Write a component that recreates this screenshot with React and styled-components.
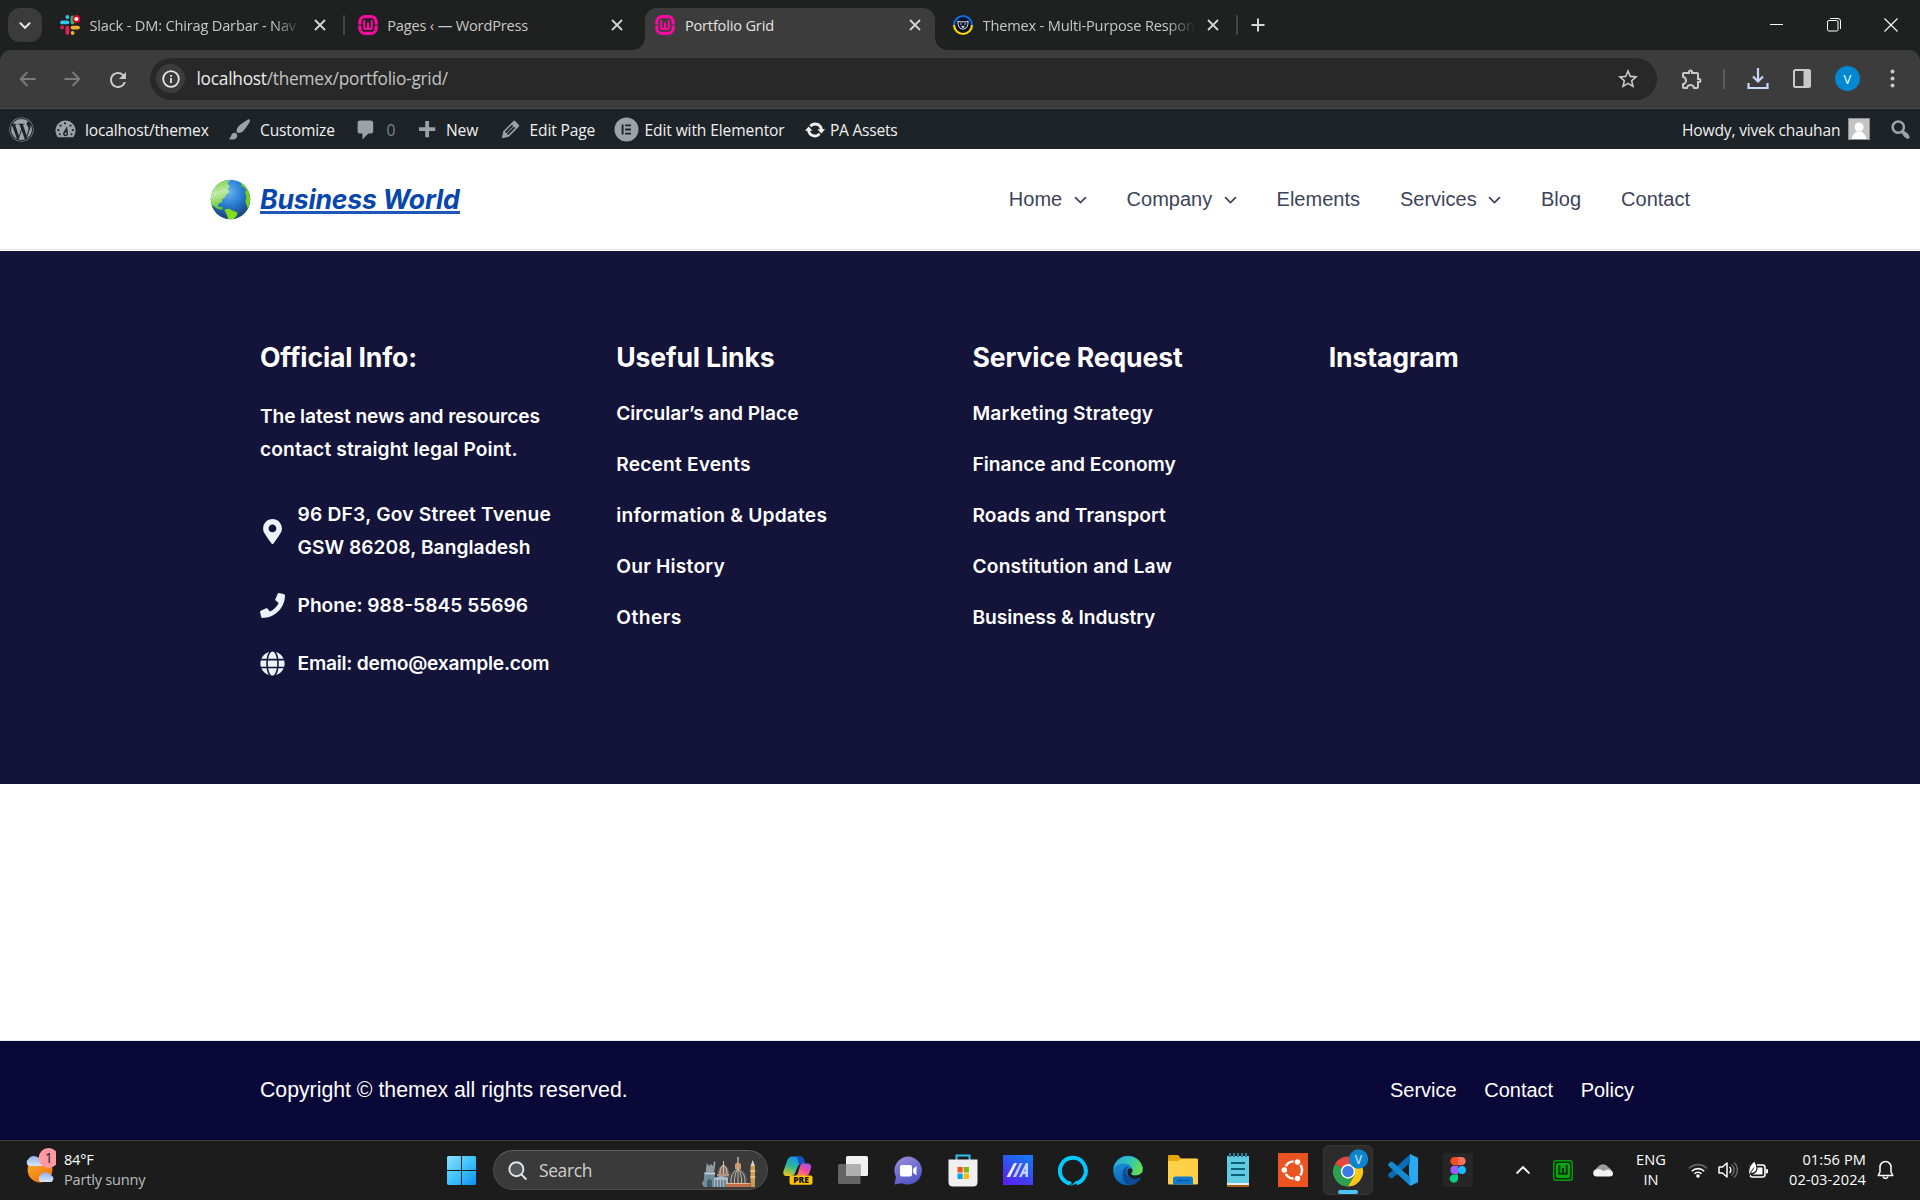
import React from "react";
import styled, { createGlobalStyle, css } from "styled-components";
import { FaMapMarkerAlt, FaPhone, FaGlobe, FaWordpress } from "react-icons/fa";
import { MdOutlineExtension, MdStarOutline, MdRefresh } from "react-icons/md";

const ui = `"Open Sans", "Noto Sans", sans-serif`;
const arial = `"Liberation Sans", Arial, sans-serif`;
const inter = `Inter, "Open Sans", sans-serif`;

const GlobalStyle = createGlobalStyle`
  * { box-sizing: border-box; }
  body { margin: 0; background: #fff; overflow: hidden; }
  svg { display: block; flex: none; }
  h2, p, ul { margin: 0; padding: 0; }
`;

const Screen = styled.div`
  width: 1920px;
  height: 1200px;
  display: flex;
  flex-direction: column;
  overflow: hidden;
  background: #fff;
`;

/* ---------- browser tabs ---------- */
const TabStrip = styled.div`
  height: 50px;
  flex: none;
  display: flex;
  background: #1f2120;
  font-family: ${ui};
  font-size: 14.6px;
  color: #c7c7c7;
`;
const TabSearch = styled.div`
  width: 34px;
  height: 34px;
  margin: 8px 8px 0 8px;
  border-radius: 12px;
  background: #3a3b3a;
  display: grid;
  place-items: center;
`;
const Tab = styled.div`
  position: relative;
  width: 297.7px;
  height: 42px;
  margin-top: 8px;
  padding: 0 0 8px 10px;
  display: flex;
  align-items: center;
  ${(p) =>
    p.$active &&
    css`
      width: 290px;
      margin-right: 7.7px;
      background: #3c3c3c;
      border-radius: 12px 12px 0 0;
      color: #e3e3e3;
      &::before,
      &::after {
        content: "";
        position: absolute;
        bottom: 0;
        width: 12px;
        height: 12px;
      }
      &::before {
        left: -12px;
        background: radial-gradient(circle at 0 0, transparent 11.5px, #3c3c3c 12px);
      }
      &::after {
        right: -12px;
        background: radial-gradient(circle at 100% 0, transparent 11.5px, #3c3c3c 12px);
      }
    `}
`;
const TabTitle = styled.span`
  width: 211px;
  margin: 0 9px 0 9.5px;
  white-space: nowrap;
  letter-spacing: -0.18px;
  ${(p) => p.$fade && "mask-image: linear-gradient(90deg, #000 87%, rgba(0,0,0,0.1) 99%);"}
`;
const TabDivider = styled.span`
  width: 2px;
  height: 20px;
  margin-left: 13px;
  border-radius: 1px;
  background: #434544;
`;
const NewTab = styled.div`
  width: 34px;
  height: 50px;
  display: grid;
  place-items: center;
`;
const WindowButtons = styled.div`
  margin-left: auto;
  width: 150px;
  padding-right: 22px;
  display: flex;
  justify-content: space-between;
  align-items: center;
`;

/* ---------- address bar ---------- */
const ToolbarWrap = styled.div`
  height: 59px;
  flex: none;
  background: #1f2120;
`;
const Toolbar = styled.div`
  height: 59px;
  display: flex;
  align-items: center;
  padding: 0 0 1px 17px;
  background: #3c3c3c;
  border-bottom: 1px solid #474a4a;
  border-radius: 11px 11px 0 0;
`;
const NavButton = styled.div`
  width: 22px;
  height: 22px;
  margin-right: ${(p) => p.$gap || 22}px;
  display: grid;
  place-items: center;
  color: ${(p) => (p.$off ? "#7b7b7b" : "#c9c9c9")};
`;
const AddressField = styled.div`
  width: 1507px;
  height: 42px;
  border-radius: 21px;
  background: #282828;
  display: flex;
  align-items: center;
  padding-left: 7px;
  font-family: ${ui};
  font-size: 17.3px;
  letter-spacing: -0.24px;
  color: #c3c3c3;
`;
const SiteInfo = styled.span`
  width: 29px;
  height: 29px;
  border-radius: 50%;
  background: #3c3c3c;
  display: grid;
  place-items: center;
  margin: 0 11.5px 0 -1px;
`;
const Host = styled.span`
  color: #ececec;
`;
const StarSlot = styled.span`
  margin-left: auto;
  margin-right: 17px;
  color: #c9c9c9;
`;
const BarTools = styled.div`
  flex: 1;
  display: flex;
  align-items: center;
  padding-left: 23px;
  color: #c9c9c9;
`;
const ToolDivider = styled.span`
  width: 2px;
  height: 20px;
  margin: 0 22px 0 19px;
  background: #5b5b5b;
`;
const PanelSlot = styled.span`
  margin-left: 24px;
`;
const Profile = styled.span`
  width: 25px;
  height: 25px;
  margin: 0 30px 0 24px;
  border-radius: 50%;
  background: #0288d1;
  color: #fff;
  font: 13px ${ui};
  display: grid;
  place-items: center;
`;

/* ---------- admin bar ---------- */
const AdminBar = styled.div`
  height: 40px;
  flex: none;
  display: flex;
  align-items: center;
  padding: 1px 7px 0 8.5px;
  background: #1d2327;
  color: #f0f0f1;
  font-family: ${ui};
  font-size: 15.6px;
`;
const AdminIcon = styled.span`
  width: 25px;
  height: 25px;
  margin-left: ${(p) => p.$ml || 0}px;
  display: grid;
  place-items: center;
  color: ${(p) => p.$c || "#9ca2a7"};
`;
const AdminLabel = styled.span`
  width: ${(p) => p.$w}px;
  margin-left: ${(p) => p.$ml || 7}px;
  letter-spacing: ${(p) => p.$ls || "-0.16px"};
  white-space: nowrap;
  color: ${(p) => p.$c || "inherit"};
`;
const AdminRight = styled.div`
  margin-left: auto;
  display: flex;
  align-items: center;
`;
const Gravatar = styled.span`
  width: 22px;
  height: 22px;
  margin: -1px 18px 0 8px;
  border: 1px solid #8c8f94;
  background: #c4c4c4;
  overflow: hidden;
`;

/* ---------- site header ---------- */
const SiteHeader = styled.header`
  height: 101px;
  flex: none;
  margin-bottom: 1px;
  border-bottom: 1px solid #e4e4e8;
  padding: 0 230px 0 210px;
  display: flex;
  align-items: center;
  justify-content: space-between;
`;
const Brand = styled.div`
  display: flex;
  align-items: center;
  gap: 9px;
`;
const BrandName = styled.span`
  width: 200px;
  height: 30px;
  font: italic 700 26.6px/31px ${inter};
  letter-spacing: -0.2px;
  color: #0746ad;
  white-space: nowrap;
  border-bottom: 3px solid #1d57b8;
`;
const Menu = styled.nav`
  display: flex;
  gap: 40px;
  font: 20px ${arial};
  color: #3d4459;
`;
const MenuItem = styled.span`
  display: flex;
  align-items: center;
  gap: 11.4px;
`;

/* ---------- info section ---------- */
const InfoSection = styled.section`
  height: 533px;
  flex: none;
  background: #14133a;
  color: #fff;
  padding: 90px 0 0 260px;
  display: grid;
  grid-template-columns: repeat(4, 356.25px);
  align-content: start;
  font: 600 19.2px/33px ${inter};
`;
const Heading = styled.h2`
  font: 700 26.6px/33px ${inter};
  letter-spacing: -0.15px;
  white-space: nowrap;
`;
const Intro = styled.div`
  margin: 26px 0 32px;
`;
const Line = styled.div`
  letter-spacing: ${(p) => p.$ls}px;
  white-space: nowrap;
`;
const ContactRow = styled.div`
  display: flex;
  align-items: center;
  margin-bottom: 25px;
`;
const ContactIcon = styled.span`
  width: 25px;
  margin-right: 12.5px;
  display: grid;
  place-items: center;
  color: #eef2f9;
`;
const LinkList = styled.ul`
  list-style: none;
  margin-top: 14px;
`;
const LinkItem = styled.li`
  line-height: 51px;
  letter-spacing: ${(p) => p.$ls}px;
`;

/* ---------- footer ---------- */
const Blank = styled.div`
  height: 257px;
  flex: none;
  border-bottom: 1px solid #e3eaec;
`;
const Footer = styled.footer`
  height: 99px;
  flex: none;
  padding: 0 286px 0 260px;
  display: flex;
  align-items: center;
  justify-content: space-between;
  background: #0a0838;
  color: #fff;
  font: 21.25px ${arial};
`;
const FooterLinks = styled.div`
  display: flex;
  gap: 27.5px;
  font-size: 20px;
`;

/* ---------- taskbar ---------- */
const Taskbar = styled.div`
  height: 60px;
  flex: none;
  display: flex;
  align-items: center;
  padding-bottom: 1px;
  background: #1c1c1c;
  border-top: 1px solid #3f4040;
  font: 14.6px/20px ${ui};
  color: #fff;
`;
const Weather = styled.div`
  width: 447px;
  padding: 0 0 3px 24px;
  display: flex;
  align-items: center;
  gap: 8px;
  letter-spacing: -0.22px;
`;
const WeatherArt = styled.div`
  margin-top: -6px;
`;
const Muted = styled.div`
  color: #bdbdbd;
`;
const SearchPill = styled.div`
  width: 275px;
  height: 40px;
  margin: 0 15px 0 17px;
  padding: 0 11px 0 14px;
  border-radius: 20px;
  border: 1px solid #4c4c4c;
  border-top-color: #606060;
  background: #3a3a3a;
  display: flex;
  align-items: center;
  font-size: 17.4px;
  color: #cfcfcf;
`;
const SearchText = styled.span`
  flex: 1;
  margin-left: 12px;
  letter-spacing: -0.35px;
`;
const SkylineSlot = styled.span`
  margin-top: 3px;
`;
const Apps = styled.div`
  display: flex;
  margin-left: -10px;
`;
const AppButton = styled.div`
  width: 50px;
  height: 50px;
  margin-right: 5px;
  display: grid;
  place-items: center;
  border-radius: 6px;
  ${(p) =>
    p.$open &&
    css`
      background: #2c2c2c;
      box-shadow: inset 0 0 0 1px #353535;
      position: relative;
      &::after {
        content: "";
        position: absolute;
        left: 15px;
        bottom: 1px;
        width: 20px;
        height: 4px;
        border-radius: 2px;
        background: #4cc2ff;
      }
    `}
`;
const Tray = styled.div`
  margin-left: auto;
  width: 407px;
  display: flex;
  align-items: center;
`;
const TrayIcon = styled.span`
  width: 20px;
  margin-right: ${(p) => p.$gap}px;
  display: grid;
  place-items: center;
`;
const TrayText = styled.div`
  width: ${(p) => p.$w}px;
  margin-right: ${(p) => p.$gap}px;
  padding-bottom: 2px;
  letter-spacing: 0.08px;
  white-space: nowrap;
  display: flex;
  flex-direction: column;
  align-items: ${(p) => (p.$align === "right" ? "flex-end" : "center")};
`;

/* ---------- drawings ---------- */
const Cross = ({ size = 10, w = 1.8, color = "#d5d5d5" }) => (
  <svg width="20" height="20" viewBox="-10 -10 20 20" stroke={color} strokeWidth={w}>
    <path d={`M${-size / 2} ${-size / 2}L${size / 2} ${size / 2}M${size / 2} ${-size / 2}L${-size / 2} ${size / 2}`} />
  </svg>
);
const Chevron = ({ w = 12, s = 1.6, up, color = "currentColor" }) => (
  <svg width={w} height={w} viewBox="0 0 12 12" fill="none" stroke={color} strokeWidth={s} strokeLinecap="round">
    <path d={up ? "M1 8.5L6 3.5L11 8.5" : "M1.4 4.2L6 8.8L10.6 4.2"} />
  </svg>
);
const SlackIcon = () => (
  <svg width="20" height="20" viewBox="0 0 20 20" strokeLinecap="round" strokeWidth="3.8" fill="none">
    <path d="M7.4 7.4H2M7.4 2V2" stroke="#36c5f0" />
    <path d="M12.5 2.5V7.4" stroke="#2eb67d" />
    <path d="M2 12.5V12.5M7.4 12.6V18" stroke="#e01e5a" />
    <path d="M12.5 12.6H18M12.6 18V18" stroke="#ecb22e" />
    <circle cx="16.4" cy="4" r="3" fill="#fff" stroke="#e60023" strokeWidth="1.8" />
  </svg>
);
const WampIcon = ({ color = "#f80a9e", bg = "#1f2120" }) => (
  <svg width="20" height="20" viewBox="0 0 20 20" fill="none">
    <rect x="1.8" y="1.6" width="16.4" height="16.8" rx="5.5" stroke={color} strokeWidth="3.2" />
    <path d="M0 10H3.5M16.5 10H20" stroke={bg} strokeWidth="1.2" />
    <path d="M6.2 5.2V12.2Q6.2 14 7.8 14Q10 14 10 12.2V7.5V12.2Q10 14 12.2 14Q13.8 14 13.8 12.2V5.2" stroke={color} strokeWidth="2.1" />
  </svg>
);
const BearIcon = () => (
  <svg width="20" height="20" viewBox="0 0 20 20">
    <path d="M0 10A10 10 0 0 1 20 10Z" fill="#0a6fe8" />
    <path d="M0 10A10 10 0 0 0 20 10Z" fill="#ffd800" />
    <circle cx="10" cy="10" r="7.9" fill="#0b1226" />
    <path d="M4.8 6.2L7 6.8H13L15.2 6.2L14.8 9.5Q14 14 10 14Q6 14 5.2 9.5Z" fill="none" stroke="#dfe5ee" strokeWidth="1" />
    <path d="M7 9H8.6M11.4 9H13M8.6 11.4H11.4L10 12.6Z" stroke="#dfe5ee" strokeWidth="1" />
  </svg>
);
const Arrow = ({ flip }) => (
  <svg width="20" height="20" viewBox="0 0 20 20" fill="none" stroke="currentColor" strokeWidth="1.9">
    <path d={flip ? "M2.5 10H17M10.5 3L17.3 10L10.5 17" : "M17.5 10H3M9.5 3L2.7 10L9.5 17"} />
  </svg>
);
const Dash = ({ d, size = 25 }) => (
  <svg width={size} height={size} viewBox="0 0 20 20" fill="currentColor">
    <path fillRule="evenodd" d={d} />
  </svg>
);
const D = {
  comment: "M5 2h9c1.1 0 2 .9 2 2v7c0 1.1-.9 2-2 2h-2l-5 5v-5H5c-1.1 0-2-.9-2-2V4c0-1.1.9-2 2-2z",
  plus: "M17 8.2v3h-5v5H9v-5H4v-3h5v-5h3v5h5z",
  edit: "M13.89 3.39l2.71 2.72c.46.46.42 1.24.03 1.64l-8.01 8.02-5.56 1.16 1.16-5.58s7.6-7.63 7.99-8.03c.39-.39 1.22-.39 1.68.07zm-2.73 2.79l-5.59 5.61 1.11 1.11 5.54-5.65zm-2.97 8.23l5.58-5.6-1.07-1.08-5.59 5.6z",
  brush:
    "M18.33 3.57s.27-.8-.31-1.36c-.53-.52-1.22-.24-1.22-.24-.61.3-5.76 3.47-7.67 5.57-.86.96-2.06 3.79-1.09 4.82.92.98 3.96-.17 4.79-1 2.06-2.06 5.21-7.17 5.5-7.79zM1.4 17.65c2.37-1.56 1.46-3.41 3.23-4.64.93-.65 2.22-.62 3.08.29.63.67.8 2.57-.16 3.46-1.57 1.45-4 1.55-6.15.89z",
  update:
    "M10.2 3.28c3.53 0 6.43 2.61 6.92 6h2.08l-3.5 4-3.5-4h2.32c-.45-1.97-2.21-3.45-4.32-3.45-1.45 0-2.73.71-3.54 1.78L4.95 5.66C6.23 4.2 8.11 3.28 10.2 3.28zm-.4 13.44c-3.52 0-6.43-2.61-6.92-6H.8l3.5-4c1.17 1.33 2.33 2.67 3.5 4H5.48c.45 1.97 2.21 3.45 4.32 3.45 1.45 0 2.73-.71 3.54-1.78l1.71 1.95c-1.28 1.46-3.15 2.38-5.25 2.38z",
  search:
    "M12.14 4.18c1.87 1.87 2.11 4.75.72 6.89.12.1.22.21.36.31.2.16.47.36.81.59.34.24.56.39.66.47.42.31.73.57.94.78.32.32.6.65.84 1 .25.35.44.69.59 1.04.14.35.21.68.18 1-.02.32-.14.59-.36.81s-.49.34-.81.36c-.31.02-.65-.04-.99-.19-.35-.14-.7-.34-1.04-.59-.35-.24-.68-.52-1-.84-.21-.21-.47-.52-.77-.93-.1-.13-.25-.35-.47-.66-.22-.32-.4-.57-.56-.78-.16-.2-.29-.35-.44-.5-2.07 1.09-4.69.76-6.44-.98-2.14-2.15-2.14-5.64 0-7.78 2.15-2.15 5.63-2.15 7.78 0zm-1.41 6.36c1.36-1.37 1.36-3.58 0-4.95-1.37-1.37-3.59-1.37-4.95 0-1.37 1.37-1.37 3.58 0 4.95 1.36 1.37 3.58 1.37 4.95 0z",
};
const Gauge = () => (
  <svg width="25" height="25" viewBox="0 0 20 20">
    <path d="M3.9 16.2H16.1C17.3 14.7 18 12.8 18 10.8C18 6.4 14.4 2.8 10 2.8S2 6.4 2 10.8C2 12.8 2.7 14.7 3.9 16.2Z" fill="#9ca2a7" />
    <g fill="#1d2327">
      <circle cx="9.6" cy="5" r="0.9" />
      <circle cx="6" cy="6.8" r="0.9" />
      <circle cx="14" cy="6.8" r="0.9" />
      <circle cx="4.2" cy="10.4" r="0.9" />
      <circle cx="15.8" cy="10.4" r="0.9" />
      <circle cx="5.4" cy="13.8" r="0.8" />
      <circle cx="14.8" cy="13.8" r="0.8" />
      <path d="M11.2 7.4L12 13A2 2 0 1 1 8.2 12.6Z" />
    </g>
    <circle cx="10.2" cy="13.2" r="0.9" fill="#9ca2a7" />
  </svg>
);
const ElementorIcon = () => (
  <svg width="25" height="25" viewBox="0 0 25 25">
    <circle cx="12.5" cy="12.5" r="12" fill="#9ca2a7" />
    <path d="M8.6 7.5V17.5M11.2 8.4H17M11.2 12.5H17M11.2 16.6H17" stroke="#1d2327" strokeWidth="1.9" />
  </svg>
);
const GlobeLogo = () => (
  <svg width="41" height="41" viewBox="0 0 40 40">
    <defs>
      <radialGradient id="sea" cx="0.45" cy="0.3" r="0.75">
        <stop offset="0" stopColor="#6bb4ee" />
        <stop offset="0.45" stopColor="#2b7fd4" />
        <stop offset="1" stopColor="#14386a" />
      </radialGradient>
      <linearGradient id="land" x1="0.2" y1="0" x2="0.4" y2="1">
        <stop offset="0" stopColor="#6fcf3a" />
        <stop offset="0.45" stopColor="#c2ebaa" />
        <stop offset="1" stopColor="#5cc820" />
      </linearGradient>
      <clipPath id="ball">
        <circle cx="20" cy="20" r="19.2" />
      </clipPath>
    </defs>
    <circle cx="20" cy="20" r="19.3" fill="url(#sea)" />
    <g clipPath="url(#ball)">
      <path d="M0 24V8L10 1L20 1.5L17 4L19.5 8L17 9L19 13L16 15L14.5 18L12 20L11.5 23L9 23.5L7.5 26L10 27.5L12 27L12.5 30L8 29.5L3 26Z" fill="url(#land)" />
      <path d="M14 30L18 29L27 33L26 36L22 40H18L16.5 35Z" fill="#86dc1c" />
      <path d="M28 1L34 5L40 13V27L36.500 28L34.500 22L35.500 17L34 13L35.500 11L32 7L30 7.500L31 5Z" fill="#6fce22" />
    </g>
  </svg>
);

/* taskbar drawings */
const WeatherIcon = () => (
  <svg width="32" height="36" viewBox="0 0 32 36">
    <defs>
      <linearGradient id="sun" x1="0" y1="0" x2="0.6" y2="1">
        <stop offset="0" stopColor="#f8b52c" />
        <stop offset="1" stopColor="#f0740f" />
      </linearGradient>
      <linearGradient id="cl" x1="0" y1="0" x2="0" y2="1">
        <stop offset="0" stopColor="#8fb0ea" />
        <stop offset="1" stopColor="#dbe6fa" />
      </linearGradient>
    </defs>
    <circle cx="16" cy="22" r="12.4" fill="url(#sun)" />
    <path d="M5 18A4 4 0 0 1 4.5 11A6 6 0 0 1 15 11A4 4 0 0 1 18 18Z" fill="url(#cl)" />
    <path d="M17 34A4 4 0 0 1 16.5 27A6 6 0 0 1 26.5 27A3.8 3.8 0 0 1 27.5 34Z" fill="url(#cl)" />
    <circle cx="24.6" cy="10" r="10" fill="#ff99a4" />
    <text x="24.6" y="15" fontSize="14" fill="#1c1c1c" textAnchor="middle" fontFamily="Open Sans">1</text>
  </svg>
);
const StartIcon = () => (
  <svg width="29" height="29" viewBox="0 0 29 29">
    <defs>
      <linearGradient id="st" x1="0" y1="0" x2="1" y2="1">
        <stop offset="0" stopColor="#8be0ff" />
        <stop offset="0.5" stopColor="#3fc3fb" />
        <stop offset="1" stopColor="#0f90f5" />
      </linearGradient>
    </defs>
    <path d="M1 0H14V14H0V1ZM15 0H28L29 1V14H15ZM0 15H14V29H1L0 28ZM15 15H29V28L28 29H15Z" fill="url(#st)" />
  </svg>
);
const Magnifier = () => (
  <svg width="19" height="19" viewBox="0 0 19 19" fill="none" stroke="#e2e4ea" strokeWidth="1.9">
    <circle cx="8.4" cy="8.2" r="7" fill="#55565a" />
    <path d="M13.4 13.3L17.8 18" strokeLinecap="round" />
  </svg>
);
const Skyline = () => (
  <svg width="54" height="32" viewBox="0 0 54 32">
    <path d="M2 31Q-2 27 2 24V16H13V31Z" fill="#6f8c9c" />
    <path d="M4 12L5 7L7 10L9 8L11 10L12 5L13.5 6L13 11L12 16H4Z" fill="#8f9aa1" />
    <path d="M3 17.5H13" stroke="#c9d6de" strokeWidth="1.6" />
    <path d="M5 31V25Q7.5 21 10 25V31Z" fill="#45596a" />
    <path d="M16 19Q16 10 21.5 9Q27 10 27 19V22H16Z" fill="#80706a" />
    <path d="M18 18Q18 11 21.5 9M25 18Q25 11 21.5 9M21.5 5V18" stroke="#dcbfa4" fill="none" />
    <path d="M15 19H28" stroke="#c9a287" strokeWidth="1.5" />
    <path d="M12 22L19 20L27 22V31H12Z" fill="#a9bcc8" />
    <path d="M14 24V31M17 24V31M20 24V31M23 24V31" stroke="#4f6475" strokeWidth="1.2" />
    <path d="M26 27Q25 14 36 13Q47 14 46 27Z" fill="#454b4c" />
    <path d="M29 27Q28 17 36 13M43 27Q44 17 36 13M36 13V27M32.5 27Q32 18 36 13M39.5 27Q40 18 36 13" stroke="#cfc4ac" strokeWidth="0.9" fill="none" />
    <path d="M33 8Q36 5 39 8V13H33Z" fill="#c99a78" />
    <path d="M36 1V7" stroke="#d8b690" strokeWidth="1.4" />
    <rect x="48.5" y="10" width="4.5" height="21" fill="#c99c50" />
    <path d="M50.7 4L53 10H48.5Z" fill="#d9d4ca" />
    <path d="M48 15H53.5M48 21H53.5" stroke="#efe2c4" />
    <path d="M24 27.5H48V31H24Z" fill="#c06f48" />
    <path d="M24 27.5H48" stroke="#eab592" />
  </svg>
);
const Copilot = () => (
  <svg width="30" height="29" viewBox="0 0 30 29">
    <defs>
      <linearGradient id="cp1" x1="0.6" y1="0" x2="0.2" y2="1">
        <stop offset="0" stopColor="#1c8df0" />
        <stop offset="0.5" stopColor="#28b79b" />
        <stop offset="1" stopColor="#e8c818" />
      </linearGradient>
      <linearGradient id="cp2" x1="0.8" y1="0" x2="0.2" y2="1">
        <stop offset="0" stopColor="#a64cf0" />
        <stop offset="0.5" stopColor="#f04a9a" />
        <stop offset="1" stopColor="#ff8a50" />
      </linearGradient>
    </defs>
    <path d="M14 .5H18Q20 1 21 4L22 7.5H19Q16 7.5 15 10L12 17Q11 20 8 20H4Q-.5 20 .5 15L4 5Q5.5 .5 9 .5Z" fill="url(#cp1)" />
    <path d="M14 .5H18Q20 1 21 4L22 7.5H19Q17 7.5 16 9Z" fill="#1550c8" />
    <path d="M19 7.5H25Q29 8 28 12L26 18Q25 20 22 20H13Q14 20 15 17L17 10Q18 7.5 19 7.5Z" fill="url(#cp2)" />
    <rect x="6.5" y="19.5" width="23" height="9.3" rx="2" fill="#ffc400" />
    <text x="18" y="27.2" fontSize="8.4" fontWeight="800" textAnchor="middle" fontFamily="Open Sans" fill="#111">PRE</text>
  </svg>
);
const TaskView = () => (
  <svg width="30" height="28" viewBox="0 0 30 28">
    <rect x="8" y="0" width="22" height="20" rx="1.5" fill="#f1f1f1" />
    <rect x="0" y="8" width="22.5" height="20" rx="1.5" fill="#6d6d6d" opacity="0.9" />
    <rect x="8" y="8" width="14.5" height="12" fill="#b0b0b0" />
  </svg>
);
const Chat = () => (
  <svg width="30" height="29" viewBox="0 0 30 29">
    <defs>
      <linearGradient id="ch" x1="0" y1="0" x2="0.5" y2="1">
        <stop offset="0" stopColor="#9a90dc" />
        <stop offset="1" stopColor="#5557c8" />
      </linearGradient>
    </defs>
    <path d="M15 .5A14 14 0 1 1 9 27.2L1.5 28.5L3 21A14 14 0 0 1 15 .5Z" fill="url(#ch)" />
    <rect x="7" y="9" width="12" height="11.5" rx="2" fill="#fff" />
    <path d="M20 13L23.5 10V19.5L20 16.5Z" fill="#fff" />
  </svg>
);
const Store = () => (
  <svg width="30" height="33" viewBox="0 0 30 33">
    <path d="M8.5 6V1.500H21.5V6" fill="none" stroke="#35bdf3" strokeWidth="2" />
    <path d="M.5 5.5H29.5V28Q29.5 32.5 25 32.5H5Q.5 32.5 .5 28Z" fill="#f0f0f0" />
    <rect x="9.5" y="13" width="5.2" height="5.5" fill="#f25022" />
    <rect x="15.7" y="13" width="5.2" height="5.5" fill="#7fba00" />
    <rect x="9.5" y="19.5" width="5.2" height="5.5" fill="#00a4ef" />
    <rect x="15.7" y="19.5" width="5.2" height="5.5" fill="#ffb900" />
  </svg>
);
const MyAsus = () => (
  <svg width="30" height="30" viewBox="0 0 30 30">
    <defs>
      <linearGradient id="ma" x1="0.8" y1="0" x2="0.2" y2="1">
        <stop offset="0" stopColor="#1379f2" />
        <stop offset="1" stopColor="#5a20f0" />
      </linearGradient>
    </defs>
    <rect width="30" height="30" fill="url(#ma)" />
    <path d="M3.5 22L11 8H14L7 22Z" fill="#e8ecff" />
    <path d="M10 22L17 8H19.500L13 22Z" fill="#c4ccff" />
    <path fillRule="evenodd" d="M16 22L23 8H25V22H22.500V19H20L18.500 22ZM21 16.500H22.500V13.500Z" fill="#c9d6ff" />
  </svg>
);
const Alexa = () => (
  <svg width="30" height="31" viewBox="0 0 30 31">
    <path d="M12 28.5A13 13 0 1 1 18.5 28.3" fill="none" stroke="#00caff" strokeWidth="4" />
    <path d="M10.5 26L13.5 31L13.5 27Z" fill="#00caff" />
    <path d="M13 30.8Q18 29 21.5 26.5L18 26Z" fill="#00caff" />
  </svg>
);
const Edge = () => (
  <svg width="30" height="31" viewBox="0 0 30 31">
    <defs>
      <linearGradient id="eg" x1="0" y1="0.2" x2="1" y2="0.5">
        <stop offset="0" stopColor="#2aa5e0" />
        <stop offset="0.5" stopColor="#2fc4b8" />
        <stop offset="1" stopColor="#66dd50" />
      </linearGradient>
      <linearGradient id="eb" x1="0" y1="0" x2="0.3" y2="1">
        <stop offset="0" stopColor="#1ea0e4" />
        <stop offset="1" stopColor="#0c62b8" />
      </linearGradient>
    </defs>
    <circle cx="15" cy="15.5" r="14.8" fill="url(#eb)" />
    <path d="M9.5 20Q9 12.5 16 11Q11 16 15 21Q19 25.5 28 22Q24 30.3 15 30.3Q10 26 9.5 20Z" fill="#0d4a94" />
    <path d="M.3 14A15 15 0 0 1 29.8 13Q30 20 23 20.5Q18 20.5 18 18.5Q20 17 19.5 14.5Q17.5 8 9.5 8.5Q3 9 .3 14Z" fill="url(#eg)" />
    <path d="M18 18.5Q18 20.5 23 20.5Q28 20 29.8 16.5Q30 20 28.5 22Q20 26 16 21.5Q13.5 17.5 15 14Q18 12 19.5 15Q19.5 17 18 18.5Z" fill="#1c1c1c" />
  </svg>
);
const Folder = () => (
  <svg width="30" height="30" viewBox="0 0 30 30">
    <path d="M0 1Q0 0 1 0H10L13 3.5H29Q30 3.5 30 5V12H0Z" fill="#e5a50a" />
    <path d="M0 6H10L13 3.8H29Q30 4 30 5V28.5Q30 29.5 29 29.5H1Q0 29.5 0 28.5Z" fill="#ffcf48" />
    <path d="M5 29.5V24Q5 21.5 7.5 21.5H22.5Q25 21.5 25 24V29.5Z" fill="#0f7cd0" />
    <path d="M9 25.5H21" stroke="#075aa0" strokeWidth="1.6" />
  </svg>
);
const Notepad = () => (
  <svg width="24" height="34" viewBox="0 0 24 34">
    <rect x="1" y="3" width="22" height="27" fill="#62cbe2" />
    <path d="M1 30H23V32H1Z" fill="#e8eef0" />
    <path d="M1 32H23V34H1Z" fill="#a55a18" />
    <path d="M4 0V4M8 0V4M12 0V4M16 0V4M20 0V4" stroke="#1f7f98" strokeWidth="2" />
    <path d="M5 10H19M5 16H19M5 22H19" stroke="#0d6074" strokeWidth="2" />
  </svg>
);
const Ubuntu = () => (
  <svg width="30" height="34" viewBox="0 0 30 34">
    <rect width="30" height="34" fill="#e95420" />
    <circle cx="15.5" cy="17" r="8.6" fill="none" stroke="#fff" strokeWidth="2.4" />
    <g fill="#fff" stroke="#e95420" strokeWidth="1.2">
      <circle cx="6.3" cy="17" r="3.4" />
      <circle cx="19.5" cy="9" r="3.4" />
      <circle cx="19.5" cy="25.5" r="3.4" />
    </g>
  </svg>
);
const Chrome = () => (
  <svg width="40" height="42" viewBox="0 0 40 42">
    <g transform="translate(20 22.5)">
      <path d="M0 0L-13 -7.5A15 15 0 0 1 13 -7.5Z" fill="#e8453c" />
      <path d="M0 0L-13 -7.5A15 15 0 0 0 0 15L6.5 3.7Z" fill="#2ca04c" />
      <path d="M0 0L6.5 3.7L0 15A15 15 0 0 0 13 -7.5H0Z" fill="#fdc716" />
      <circle r="7.2" fill="#fff" />
      <circle r="5.7" fill="#3b7be8" />
    </g>
    <circle cx="30.5" cy="10" r="9.7" fill="#0c84cc" />
    <text x="30.5" y="14.5" fontSize="12" fontWeight="600" textAnchor="middle" fontFamily="Open Sans" fill="#b8dcf2">V</text>
  </svg>
);
const VsCode = () => (
  <svg width="30" height="32" viewBox="0 0 30 30" preserveAspectRatio="none">
    <path d="M22 0L30 3.5V26.5L22 30L21 20V10Z" fill="#2aa8f0" />
    <path d="M22 .2V8.5L4 23L1.5 22L.3 20.5V19Z" fill="#0a6cb8" />
    <path d="M22 29.8V21.5L4 7L1.5 8L.3 9.5V11Z" fill="#1787d0" />
  </svg>
);
const Figma = () => (
  <svg width="30" height="34" viewBox="0 0 30 34">
    <rect width="30" height="34" rx="2" fill="#262626" />
    <path d="M15 4H11.5A4 4 0 0 0 11.5 12.3H15Z" fill="#f24e1e" />
    <path d="M15 4H18.5A4 4 0 0 1 18.5 12.3H15Z" fill="#ff7262" />
    <path d="M15 12.8H11.5A4 4 0 0 0 11.5 21H15Z" fill="#a259ff" />
    <circle cx="18.9" cy="16.9" r="4" fill="#1abcfe" />
    <path d="M15 21.5H11.5A4.2 4.2 0 1 0 15 25.7Z" fill="#0acf83" />
  </svg>
);
const TrayWamp = () => (
  <svg width="20" height="21" viewBox="0 0 20 21" fill="none">
    <rect x="0.7" y="0.7" width="18.6" height="19.6" rx="2" fill="#06300a" stroke="#0a9a10" strokeWidth="1.4" />
    <rect x="3" y="3" width="14" height="15" rx="2.5" fill="#0ba50f" />
    <path d="M6.3 5V13.8H10V8V13.8H13.7V5" stroke="#073307" strokeWidth="2" />
  </svg>
);
const Cloud = () => (
  <svg width="20" height="14" viewBox="0 0 20 14">
    <path d="M3 10A4 4 0 0 1 5 4A6 6 0 0 1 15 4Q19 6 18 10Z" fill="#9c9c9c" />
    <path d="M3.5 13.5A3.5 3.5 0 0 1 4 6.5Q7 5 10 8L15 6.5Q20 7 20 10.5Q20 13.5 17 13.5Z" fill="#f5f5f5" />
  </svg>
);
const Wifi = () => (
  <svg width="20" height="16" viewBox="0 0 20 16" fill="none" strokeWidth="1.6">
    <path d="M1 6.5A12.5 12.5 0 0 1 19 6.5" stroke="#666" />
    <path d="M3.8 9.2A8.7 8.7 0 0 1 16.2 9.2M6.4 11.8A5 5 0 0 1 13.6 11.8" stroke="#fff" />
    <circle cx="10" cy="14" r="1.8" fill="#fff" />
  </svg>
);
const Speaker = () => (
  <svg width="20" height="18" viewBox="0 0 20 18" fill="none" strokeWidth="1.5">
    <path d="M1 6H4.5L9 2V16L4.5 12H1Z" stroke="#fff" strokeLinejoin="round" />
    <path d="M11.5 6A4 4 0 0 1 11.5 12" stroke="#fff" />
    <path d="M13.5 3.5A7 7 0 0 1 13.5 14.5M16 1.5A10 10 0 0 1 16 16.5" stroke="#6a6a6a" />
  </svg>
);
const Battery = () => (
  <svg width="20" height="20" viewBox="0 0 20 20">
    <rect x="2" y="5" width="15" height="12" rx="2.5" fill="none" stroke="#fff" strokeWidth="1.6" />
    <rect x="18" y="9" width="2" height="4.5" rx="1" fill="#fff" />
    <path d="M5 7.5H14.5V14.5H5Z" fill="#fff" />
    <path d="M.8 14.5Q-.5 6 6.5 .8Q10 6 8.5 10.5Q7 14 2.5 13.5L1 16Z" fill="#fff" stroke="#1c1c1c" strokeWidth="1.2" />
    <path d="M2.5 13L6 7.5" stroke="#1c1c1c" />
  </svg>
);
const Bell = () => (
  <svg width="17" height="20" viewBox="0 0 17 20" fill="none" stroke="#fff" strokeWidth="1.5" strokeLinejoin="round">
    <path d="M1.2 15.5L3 12V7A5.5 5.5 0 0 1 14 7V12L15.8 15.5Z" />
    <path d="M6 16.5A2.6 2.6 0 0 0 11 16.5" />
  </svg>
);

const usefulLinks = [
  ["Circular’s and Place", -0.06],
  ["Recent Events", 0.17],
  ["information & Updates", 0.2],
  ["Our History", 0.22],
  ["Others", 0.45],
];
const services = [
  ["Marketing Strategy", 0.17],
  ["Finance and Economy", -0.03],
  ["Roads and Transport", 0.03],
  ["Constitution and Law", 0.17],
  ["Business & Industry", -0.05],
];
const menu = [["Home", 1], ["Company", 1], ["Elements"], ["Services", 1], ["Blog"], ["Contact"]];
const apps = [Copilot, TaskView, Chat, Store, MyAsus, Alexa, Edge, Folder, Notepad, Ubuntu, Chrome, VsCode, Figma];

export default function App() {
  return (
    <Screen>
      <GlobalStyle />
      <TabStrip>
        <TabSearch>
          <Chevron w={12} s={2} color="#e3e3e3" />
        </TabSearch>
        <Tab>
          <SlackIcon />
          <TabTitle $fade>Slack - DM: Chirag Darbar - Nav</TabTitle>
          <Cross />
          <TabDivider />
        </Tab>
        <Tab>
          <WampIcon />
          <TabTitle>Pages ‹ — WordPress</TabTitle>
          <Cross />
        </Tab>
        <Tab $active>
          <WampIcon bg="#3c3c3c" />
          <TabTitle>Portfolio Grid</TabTitle>
          <Cross />
        </Tab>
        <Tab>
          <BearIcon />
          <TabTitle $fade>Themex - Multi-Purpose Respon</TabTitle>
          <Cross />
          <TabDivider />
        </Tab>
        <NewTab>
          <svg width="14" height="14" viewBox="0 0 14 14" stroke="#d5d5d5" strokeWidth="2">
            <path d="M7 .5V13.5M.5 7H13.5" />
          </svg>
        </NewTab>
        <WindowButtons>
          <svg width="14" height="14" viewBox="0 0 14 14" stroke="#fff">
            <path d="M0 6.5H13" />
          </svg>
          <svg width="14" height="14" viewBox="0 0 14 14" fill="none" stroke="#fff">
            <rect x="0.5" y="2.5" width="10.5" height="10.5" rx="1.5" />
            <path d="M3 .5H11Q13.5 .5 13.5 3V11" />
          </svg>
          <svg width="14" height="14" viewBox="0 0 14 14" stroke="#fff" strokeWidth="1.1">
            <path d="M.5 .5L13.5 13.5M13.5 .5L.5 13.5" />
          </svg>
        </WindowButtons>
      </TabStrip>

      <ToolbarWrap>
        <Toolbar>
          <NavButton $off>
            <Arrow />
          </NavButton>
          <NavButton $off $gap={23}>
            <Arrow flip />
          </NavButton>
          <NavButton>
            <MdRefresh size={24} />
          </NavButton>
          <AddressField>
            <SiteInfo>
              <svg width="18" height="18" viewBox="0 0 18 18" fill="none" stroke="#e6e6e6" strokeWidth="1.8">
                <circle cx="9" cy="9" r="7.8" />
                <path d="M9 8V13M9 5V6.7" />
              </svg>
            </SiteInfo>
            <span>
              <Host>localhost</Host>/themex/portfolio-grid/
            </span>
            <StarSlot>
              <MdStarOutline size={24} />
            </StarSlot>
          </AddressField>
          <BarTools>
            <MdOutlineExtension size={24} />
            <ToolDivider />
            <svg width="22" height="22" viewBox="0 0 22 22" fill="none" stroke="#c6d9fb" strokeWidth="2.2">
              <path d="M11 0V13M6 8.5L11 13.5L16 8.5M1.5 15V20H20.5V15" />
            </svg>
            <PanelSlot>
              <svg width="18" height="19" viewBox="0 0 18 19">
                <rect x="1" y="1" width="16" height="17" rx="1.5" fill="none" stroke="#c9c9c9" strokeWidth="2" />
                <rect x="10.5" y="1" width="7" height="17" fill="#c9c9c9" />
              </svg>
            </PanelSlot>
            <Profile>V</Profile>
            <svg width="5" height="19" viewBox="0 0 5 19" fill="#c9c9c9">
              <circle cx="2.5" cy="2.5" r="2" />
              <circle cx="2.5" cy="9.5" r="2" />
              <circle cx="2.5" cy="16.5" r="2" />
            </svg>
          </BarTools>
        </Toolbar>
      </ToolbarWrap>

      <AdminBar>
        <AdminIcon>
          <FaWordpress size={25} />
        </AdminIcon>
        <AdminIcon $ml={19}>
          <Gauge />
        </AdminIcon>
        <AdminLabel $w={124} $ml={7.5}>localhost/themex</AdminLabel>
        <AdminIcon $ml={18}>
          <Dash d={D.brush} />
        </AdminIcon>
        <AdminLabel $w={75} $ml={8}>Customize</AdminLabel>
        <AdminIcon $ml={18.5}>
          <Dash d={D.comment} size={24} />
        </AdminIcon>
        <AdminLabel $w={9} $ml={8} $c="#7d8388">0</AdminLabel>
        <AdminIcon $ml={18}>
          <Dash d={D.plus} />
        </AdminIcon>
        <AdminLabel $w={33} $ml={7.5}>New</AdminLabel>
        <AdminIcon $ml={18.5}>
          <Dash d={D.edit} />
        </AdminIcon>
        <AdminLabel $w={66} $ml={7}>Edit Page</AdminLabel>
        <AdminIcon $ml={18.5}>
          <ElementorIcon />
        </AdminIcon>
        <AdminLabel $w={140} $ml={5.5} $ls="-0.12px">Edit with Elementor</AdminLabel>
        <AdminIcon $ml={17.5} $c="#f0f0f1">
          <Dash d={D.update} size={22} />
        </AdminIcon>
        <AdminLabel $w={68} $ml={3} $ls="-0.26px">PA Assets</AdminLabel>
        <AdminRight>
          <AdminLabel $w={158} $ls="-0.18px">Howdy, vivek chauhan</AdminLabel>
          <Gravatar>
            <svg width="20" height="20" viewBox="0 0 20 20" fill="#fff">
              <circle cx="10" cy="8" r="4.5" />
              <path d="M2.5 20Q4 14 8 12.5H12Q16 14 17.5 20Z" />
            </svg>
          </Gravatar>
          <AdminIcon>
            <Dash d={D.search} />
          </AdminIcon>
        </AdminRight>
      </AdminBar>

      <SiteHeader>
        <Brand>
          <GlobeLogo />
          <BrandName>Business World</BrandName>
        </Brand>
        <Menu>
          {menu.map(([name, sub]) => (
            <MenuItem key={name}>
              {name}
              {sub && <Chevron w={13} s={1.6} />}
            </MenuItem>
          ))}
        </Menu>
      </SiteHeader>

      <InfoSection>
        <div>
          <Heading>Official Info:</Heading>
          <Intro>
            <Line $ls={-0.12}>The latest news and resources</Line>
            <Line $ls={0.12}>contact straight legal Point.</Line>
          </Intro>
          <ContactRow>
            <ContactIcon>
              <FaMapMarkerAlt size={25} />
            </ContactIcon>
            <div>
              <Line $ls={0.22}>96 DF3, Gov Street Tvenue</Line>
              <Line $ls={0.05}>GSW 86208, Bangladesh</Line>
            </div>
          </ContactRow>
          <ContactRow>
            <ContactIcon>
              <FaPhone size={25} />
            </ContactIcon>
            <Line $ls={0}>Phone: 988-5845 55696</Line>
          </ContactRow>
          <ContactRow>
            <ContactIcon>
              <FaGlobe size={25} />
            </ContactIcon>
            <Line $ls={-0.23}>Email: demo@example.com</Line>
          </ContactRow>
        </div>
        <div>
          <Heading>Useful Links</Heading>
          <LinkList>
            {usefulLinks.map(([t, ls]) => (
              <LinkItem key={t} $ls={ls}>{t}</LinkItem>
            ))}
          </LinkList>
        </div>
        <div>
          <Heading>Service Request</Heading>
          <LinkList>
            {services.map(([t, ls]) => (
              <LinkItem key={t} $ls={ls}>{t}</LinkItem>
            ))}
          </LinkList>
        </div>
        <div>
          <Heading>Instagram</Heading>
        </div>
      </InfoSection>

      <Blank />

      <Footer>
        <span>Copyright © themex all rights reserved.</span>
        <FooterLinks>
          <span>Service</span>
          <span>Contact</span>
          <span>Policy</span>
        </FooterLinks>
      </Footer>

      <Taskbar>
        <Weather>
          <WeatherArt>
            <WeatherIcon />
          </WeatherArt>
          <div>
            <div>84°F</div>
            <Muted>Partly sunny</Muted>
          </div>
        </Weather>
        <StartIcon />
        <SearchPill>
          <Magnifier />
          <SearchText>Search</SearchText>
          <SkylineSlot>
            <Skyline />
          </SkylineSlot>
        </SearchPill>
        <Apps>
          {apps.map((Icon, i) => (
            <AppButton key={i} $open={Icon === Chrome}>
              <Icon />
            </AppButton>
          ))}
        </Apps>
        <Tray>
          <TrayIcon $gap={20}>
            <Chevron up w={14} s={1.7} color="#fff" />
          </TrayIcon>
          <TrayIcon $gap={20}>
            <TrayWamp />
          </TrayIcon>
          <TrayIcon $gap={23}>
            <Cloud />
          </TrayIcon>
          <TrayText $w={30} $gap={22} $align="center">
            <span>ENG</span>
            <span>IN</span>
          </TrayText>
          <TrayIcon $gap={10}>
            <Wifi />
          </TrayIcon>
          <TrayIcon $gap={10}>
            <Speaker />
          </TrayIcon>
          <TrayIcon $gap={16}>
            <Battery />
          </TrayIcon>
          <TrayText $w={82} $gap={9} $align="right">
            <span>01:56 PM</span>
            <span>02-03-2024</span>
          </TrayText>
          <TrayIcon $gap={0}>
            <Bell />
          </TrayIcon>
        </Tray>
      </Taskbar>
    </Screen>
  );
}
